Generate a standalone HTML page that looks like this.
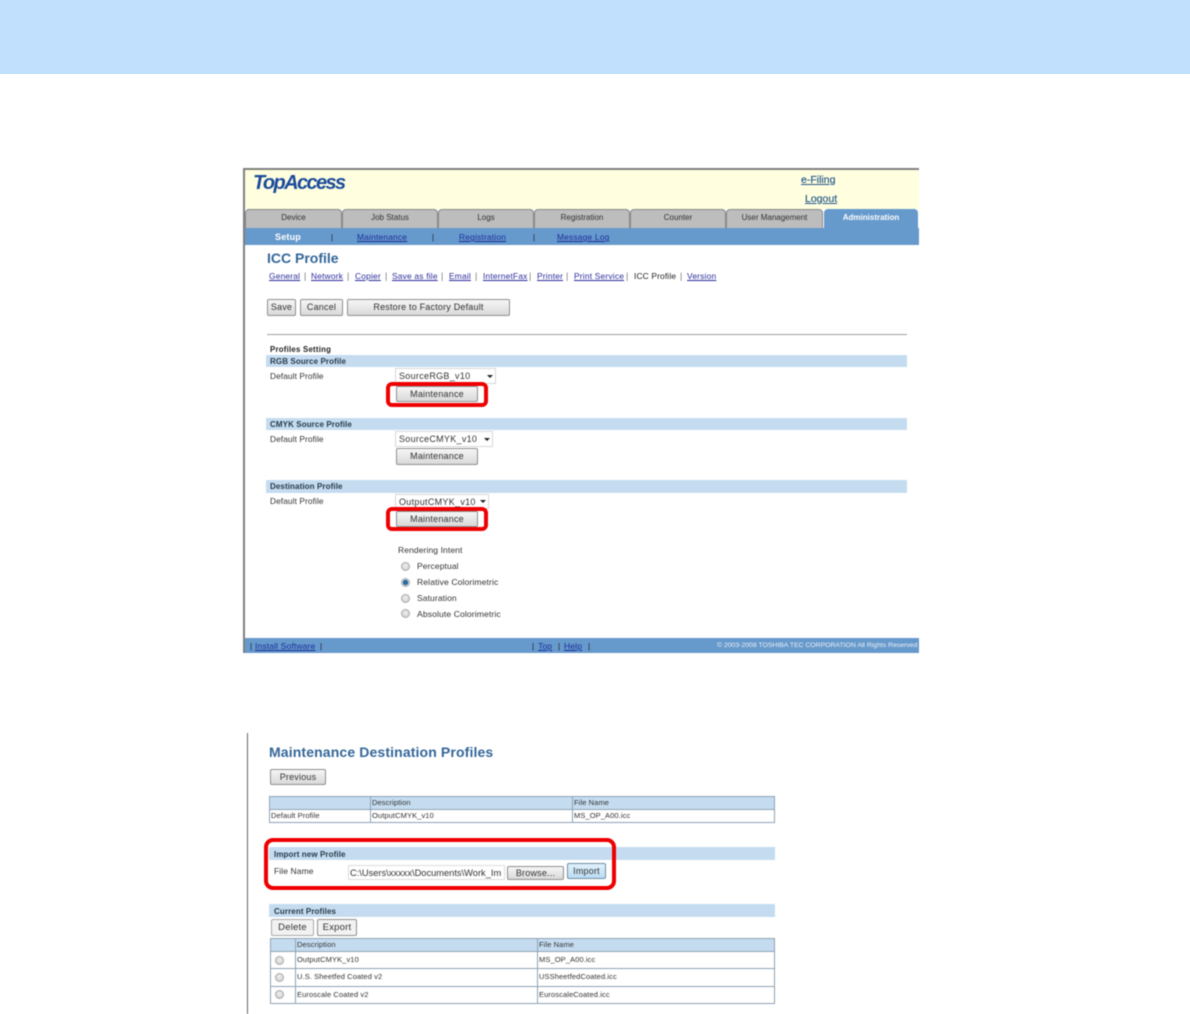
<!DOCTYPE html>
<html><head><meta charset="utf-8">
<style>
html,body{margin:0;padding:0;background:#fff}
#p{position:relative;width:1190px;height:1014px;overflow:hidden;background:#fff;font-family:"Liberation Sans",sans-serif;color:#222}
#b{position:absolute;left:0;top:0;width:1190px;height:1014px;filter:blur(.4px)}
#b div,#b a,#b span.a{position:absolute;white-space:nowrap}
.r{background:#6699cc}
.t{font-size:8.3px;line-height:12px;letter-spacing:.1px}
.tab{top:209px;height:19px;background:#bdbdbd;border:1px solid #8a8a8a;border-bottom:0;border-radius:4px 4px 0 0;box-sizing:border-box;text-align:center;font-size:8px;line-height:16px;letter-spacing:0;color:#333}
a{color:#22229a;text-decoration:underline}
.sub{font-size:8.4px;line-height:12px;top:231px;letter-spacing:.2px;color:#1c2f9a}
.sep{font-size:8px;line-height:12px;top:232px;color:#223}
.l{font-size:8.4px;line-height:12px;top:270px;letter-spacing:.2px;color:#2a2a9c}
.s{font-size:9px;line-height:12px;top:270px;color:#777}
.btn{box-sizing:border-box;border:1px solid #8f8f8f;border-radius:2px;background:linear-gradient(#f6f6f6,#d9d9d9);text-align:center;font-size:9px;color:#333;letter-spacing:.2px}
.band{background:#c5dcf0;font-size:8px;font-weight:bold;color:#263a4a;padding-left:4px;box-sizing:border-box;letter-spacing:.1px}
.sel{box-sizing:border-box;border:1px solid #d8d8d8;background:#fff;font-size:9px;line-height:14px;padding-left:3px;color:#333;letter-spacing:.3px}
.arr{width:0;height:0;border-left:3px solid transparent;border-right:3px solid transparent;border-top:3px solid #222}
.red{box-sizing:border-box;border:4px solid #ee0000;border-radius:6px}
.rad{width:9px;height:9px;border-radius:50%;box-sizing:border-box;border:1px solid #aaa;background:radial-gradient(circle at 50% 40%,#f0f0f0,#c8c8c8)}
.c{font-size:7.5px;line-height:12px;color:#333;letter-spacing:.1px}
.ln{background:#8fa3b3}
.th{background:#c5dcf0}
</style></head><body>
<div id="p">
<div style="position:absolute;left:0;top:0;width:1190px;height:74px;background:#c1e0fd"></div>
<div id="b">

<!-- Screenshot 1 -->
<div style="left:243px;top:168px;width:676px;height:2px;background:#7f7f7f"></div>
<div style="left:243px;top:168px;width:2px;height:485px;background:#7f7f7f"></div>
<div style="left:245px;top:170px;width:674px;height:39px;background:#ffffdf"></div>
<div style="left:253px;top:171px;font:italic bold 20px/25px 'Liberation Sans',sans-serif;letter-spacing:-1.6px;color:#1a4a9c">TopAccess</div>
<a style="left:801px;top:174px;font-size:10.5px;line-height:13px;color:#2a5a8c;-webkit-text-stroke:.2px #2a5a8c">e-Filing</a>
<a style="left:805px;top:193px;font-size:10.5px;line-height:13px;color:#2a5a8c;-webkit-text-stroke:.2px #2a5a8c">Logout</a>

<div class="tab" style="left:245px;width:97px">Device</div>
<div class="tab" style="left:342px;width:96px">Job Status</div>
<div class="tab" style="left:438px;width:96px">Logs</div>
<div class="tab" style="left:534px;width:96px">Registration</div>
<div class="tab" style="left:630px;width:96px">Counter</div>
<div class="tab" style="left:726px;width:97px">User Management</div>
<div class="tab" style="left:824px;width:94px;background:#6699cc;border-color:#6699cc;color:#fff;font-weight:bold">Administration</div>

<div class="r" style="left:245px;top:228px;width:674px;height:17px"></div>
<div style="left:275px;top:231px;font-size:9px;line-height:12px;font-weight:bold;color:#fff;letter-spacing:.2px">Setup</div>
<div class="sep" style="left:331px">|</div>
<a class="sub" style="left:357px">Maintenance</a>
<div class="sep" style="left:432px">|</div>
<a class="sub" style="left:459px">Registration</a>
<div class="sep" style="left:533px">|</div>
<a class="sub" style="left:557px">Message Log</a>

<div style="left:267px;top:249px;font-size:14px;line-height:18px;font-weight:bold;color:#336699">ICC Profile</div>

<a class="l" style="left:269px">General</a><div class="s" style="left:304px">|</div>
<a class="l" style="left:311px">Network</a><div class="s" style="left:347px">|</div>
<a class="l" style="left:355px">Copier</a><div class="s" style="left:385px">|</div>
<a class="l" style="left:392px">Save as file</a><div class="s" style="left:441px">|</div>
<a class="l" style="left:449px">Email</a><div class="s" style="left:475px">|</div>
<a class="l" style="left:483px">InternetFax</a><div class="s" style="left:529px">|</div>
<a class="l" style="left:537px">Printer</a><div class="s" style="left:566px">|</div>
<a class="l" style="left:574px">Print Service</a><div class="s" style="left:626px">|</div>
<div class="l" style="left:634px;color:#222;letter-spacing:.15px">ICC Profile</div><div class="s" style="left:680px">|</div>
<a class="l" style="left:687px">Version</a>

<div class="btn" style="left:267px;top:299px;width:29px;height:17px;line-height:14px">Save</div>
<div class="btn" style="left:300px;top:299px;width:43px;height:17px;line-height:14px">Cancel</div>
<div class="btn" style="left:347px;top:299px;width:163px;height:17px;line-height:14px">Restore to Factory Default</div>

<div style="left:267px;top:334px;width:640px;height:1px;background:#a0a0a0"></div>
<div class="t" style="left:270px;top:344px;font-weight:bold;font-size:7.8px;color:#222;letter-spacing:.25px">Profiles Setting</div>

<div class="band" style="left:266px;top:355px;width:641px;height:12px;line-height:13px">RGB Source Profile</div>
<div class="t" style="left:270px;top:370px;color:#333">Default Profile</div>
<div class="sel" style="left:395px;top:368px;width:101px;height:16px">SourceRGB_v10</div>
<div class="arr" style="left:487px;top:375px"></div>
<div class="btn" style="left:396px;top:386px;width:82px;height:16px;line-height:14px">Maintenance</div>
<div class="red" style="left:386px;top:382px;width:102px;height:25px"></div>

<div class="band" style="left:266px;top:418px;width:641px;height:12px;line-height:13px">CMYK Source Profile</div>
<div class="t" style="left:270px;top:433px;color:#333">Default Profile</div>
<div class="sel" style="left:395px;top:431px;width:98px;height:16px">SourceCMYK_v10</div>
<div class="arr" style="left:484px;top:438px"></div>
<div class="btn" style="left:396px;top:448px;width:82px;height:17px;line-height:15px">Maintenance</div>

<div class="band" style="left:266px;top:480px;width:641px;height:13px;line-height:14px">Destination Profile</div>
<div class="t" style="left:270px;top:495px;color:#333">Default Profile</div>
<div class="sel" style="left:395px;top:494px;width:94px;height:15px">OutputCMYK_v10</div>
<div class="arr" style="left:480px;top:500px"></div>
<div class="btn" style="left:396px;top:511px;width:82px;height:16px;line-height:14px">Maintenance</div>
<div class="red" style="left:386px;top:507px;width:102px;height:24px"></div>

<div class="t" style="left:398px;top:544px;color:#333;font-size:8.5px">Rendering Intent</div>
<div class="rad" style="left:401px;top:562px"></div><div class="t" style="left:417px;top:560px;color:#333;font-size:8.5px">Perceptual</div>
<div class="rad" style="left:401px;top:578px;background:radial-gradient(circle,#2a6a9c 0 2.5px,#dfe6ec 3px)"></div><div class="t" style="left:417px;top:576px;color:#333;font-size:8.6px">Relative Colorimetric</div>
<div class="rad" style="left:401px;top:594px"></div><div class="t" style="left:417px;top:592px;color:#333;font-size:8.5px">Saturation</div>
<div class="rad" style="left:401px;top:609px"></div><div class="t" style="left:417px;top:608px;color:#333;font-size:8.6px">Absolute Colorimetric</div>

<div class="r" style="left:245px;top:638px;width:674px;height:15px"></div>
<div class="t" style="left:250px;top:640px;color:#223">|</div>
<a class="t" style="left:255px;top:640px;color:#1c2f9a;font-size:8.6px">Install Software</a>
<div class="t" style="left:320px;top:640px;color:#223">|</div>
<div class="t" style="left:532px;top:640px;color:#223">|</div>
<a class="t" style="left:538px;top:640px;color:#1c2f9a;font-size:8.6px">Top</a>
<div class="t" style="left:558px;top:640px;color:#223">|</div>
<a class="t" style="left:564px;top:640px;color:#1c2f9a;font-size:8.6px">Help</a>
<div class="t" style="left:588px;top:640px;color:#223">|</div>
<div style="left:717px;top:640px;font-size:6.85px;line-height:12px;color:#eef2f6">© 2003-2008 TOSHIBA TEC CORPORATION All Rights Reserved</div>

<!-- Screenshot 2 -->
<div style="left:247px;top:733px;width:1px;height:281px;background:#666"></div>
<div style="left:269px;top:743px;font-size:14px;line-height:18px;font-weight:bold;color:#336699;letter-spacing:.13px">Maintenance Destination Profiles</div>
<div class="btn" style="left:270px;top:769px;width:56px;height:16px;line-height:14px">Previous</div>

<div class="th" style="left:269px;top:796px;width:506px;height:13px"></div>
<div class="ln" style="left:269px;top:796px;width:506px;height:1px"></div>
<div class="ln" style="left:269px;top:809px;width:506px;height:1px"></div>
<div class="ln" style="left:269px;top:822px;width:506px;height:1px"></div>
<div class="ln" style="left:269px;top:796px;width:1px;height:27px"></div>
<div class="ln" style="left:370px;top:796px;width:1px;height:27px"></div>
<div class="ln" style="left:572px;top:796px;width:1px;height:27px"></div>
<div class="ln" style="left:774px;top:796px;width:1px;height:27px"></div>
<div class="c" style="left:372px;top:797px">Description</div>
<div class="c" style="left:574px;top:797px">File Name</div>
<div class="c" style="left:271px;top:810px">Default Profile</div>
<div class="c" style="left:372px;top:810px">OutputCMYK_v10</div>
<div class="c" style="left:574px;top:810px">MS_OP_A00.icc</div>

<div class="band" style="left:269px;top:847px;width:506px;height:13px;line-height:15px;padding-left:5px">Import new Profile</div>
<div class="t" style="left:274px;top:865px;color:#333;font-size:8.5px">File Name</div>
<div style="left:348px;top:865px;width:157px;height:15px;box-sizing:border-box;border:1px solid #ddd;font-size:9.3px;line-height:14px;padding-left:1px;overflow:hidden;color:#333">C:\Users\xxxxx\Documents\Work_Im</div>
<div class="btn" style="left:507px;top:866px;width:57px;height:14px;line-height:12px">Browse...</div>
<div class="btn" style="left:567px;top:863px;width:39px;height:16px;line-height:14px;background:linear-gradient(#e2f1fb,#b9dcf3);border-color:#6f8ea5">Import</div>
<div class="red" style="left:264px;top:838px;width:352px;height:52px;border-radius:9px"></div>

<div class="band" style="left:269px;top:904px;width:506px;height:13px;line-height:15px;padding-left:5px">Current Profiles</div>
<div class="btn" style="left:271px;top:919px;width:43px;height:17px;line-height:15px;font-size:9.5px;background:#f2f2f2;border-color:#aaa">Delete</div>
<div class="btn" style="left:317px;top:919px;width:40px;height:17px;line-height:15px;font-size:9.5px;background:#f2f2f2">Export</div>

<div class="th" style="left:270px;top:938px;width:505px;height:13px"></div>
<div class="ln" style="left:270px;top:938px;width:505px;height:1px"></div>
<div class="ln" style="left:270px;top:951px;width:505px;height:1px"></div>
<div class="ln" style="left:270px;top:968px;width:505px;height:1px"></div>
<div class="ln" style="left:270px;top:986px;width:505px;height:1px"></div>
<div class="ln" style="left:270px;top:1003px;width:505px;height:1px"></div>
<div class="ln" style="left:270px;top:938px;width:1px;height:66px"></div>
<div class="ln" style="left:295px;top:938px;width:1px;height:66px"></div>
<div class="ln" style="left:537px;top:938px;width:1px;height:66px"></div>
<div class="ln" style="left:774px;top:938px;width:1px;height:66px"></div>
<div class="c" style="left:297px;top:939px">Description</div>
<div class="c" style="left:539px;top:939px">File Name</div>
<div class="rad" style="left:275px;top:956px"></div>
<div class="c" style="left:297px;top:954px">OutputCMYK_v10</div>
<div class="c" style="left:539px;top:954px">MS_OP_A00.icc</div>
<div class="rad" style="left:275px;top:973px"></div>
<div class="c" style="left:297px;top:971px">U.S. Sheetfed Coated v2</div>
<div class="c" style="left:539px;top:971px">USSheetfedCoated.icc</div>
<div class="rad" style="left:275px;top:990px"></div>
<div class="c" style="left:297px;top:989px">Euroscale Coated v2</div>
<div class="c" style="left:539px;top:989px">EuroscaleCoated.icc</div>
</div></div>
</body></html>
